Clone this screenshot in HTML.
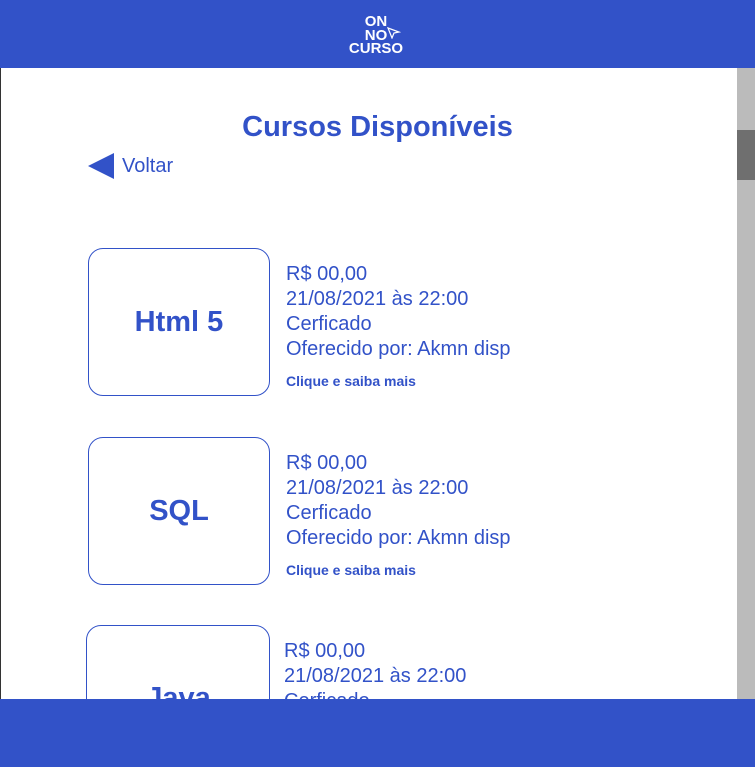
<!DOCTYPE html><html style="width:755px;height:767px;overflow:hidden"><head><style>
body{margin:0;width:755px;height:767px;overflow:hidden;position:relative;background:#fff;font-family:"Liberation Sans",sans-serif;color:#3252c8}
.top{position:absolute;left:0;top:0;width:755px;height:68px;background:#3252c8}
.bot{position:absolute;left:0;top:699px;width:755px;height:68px;background:#3252c8}
.edge{position:absolute;left:0;top:68px;width:1px;height:631px;background:#333}
.sb{position:absolute;left:737px;top:68px;width:18px;height:631px;background:#bbb}
.th{position:absolute;left:737px;top:130px;width:18px;height:50px;background:#6f6f6f}
.logo{position:absolute;top:15px;left:348px;color:#fff;font-weight:bold;font-size:15px;line-height:13.5px;text-align:center;width:56px}
h1{position:absolute;margin:0;top:111px;left:0;width:755px;text-align:center;font-size:29px;font-weight:bold}
.back{position:absolute;left:88px;top:152px;font-size:20px;display:flex;align-items:center}
.card{position:absolute;width:180px;height:146px;border:1.5px solid #3252c8;border-radius:15px;font-weight:bold;font-size:29px;display:flex;align-items:center;justify-content:center}
.info{position:absolute;font-size:20px;line-height:25px}
.more{font-size:14px;font-weight:bold;margin-top:11px;line-height:16px}
</style></head><body>
<div class="top"></div>
<div class="logo">ON<br>NO<br>CURSO</div>
<svg style="position:absolute;left:387px;top:26px" width="14" height="13"><path d="M1 2 L12 6 L7 7 L5 12 Z" fill="none" stroke="#fff" stroke-width="1.2"/></svg>
<div class="edge"></div><div class="sb"></div><div class="th"></div>
<h1>Cursos Disponíveis</h1>
<div class="back"><svg width="28" height="28" style="margin-right:6px"><path d="M0 14 L26 1 L26 27 Z" fill="#3252c8"/></svg>Voltar</div>
<div class="card" style="left:88px;top:248px">Html 5</div>
<div class="info" style="left:286px;top:262px">R$ 00,00<br>21/08/2021 às 22:00<br>Cerficado<br>Oferecido por: Akmn disp<div class="more">Clique e saiba mais</div></div>
<div class="card" style="left:88px;top:437px">SQL</div>
<div class="info" style="left:286px;top:451px">R$ 00,00<br>21/08/2021 às 22:00<br>Cerficado<br>Oferecido por: Akmn disp<div class="more">Clique e saiba mais</div></div>
<div class="card" style="left:86px;top:625px;width:182px"></div>
<div style="position:absolute;left:86px;top:682px;width:185px;text-align:center;font-weight:bold;font-size:29px">Java</div>
<div class="info" style="left:284px;top:639px">R$ 00,00<br>21/08/2021 às 22:00<br>Cerficado</div>
<div class="bot"></div>
</body></html>
